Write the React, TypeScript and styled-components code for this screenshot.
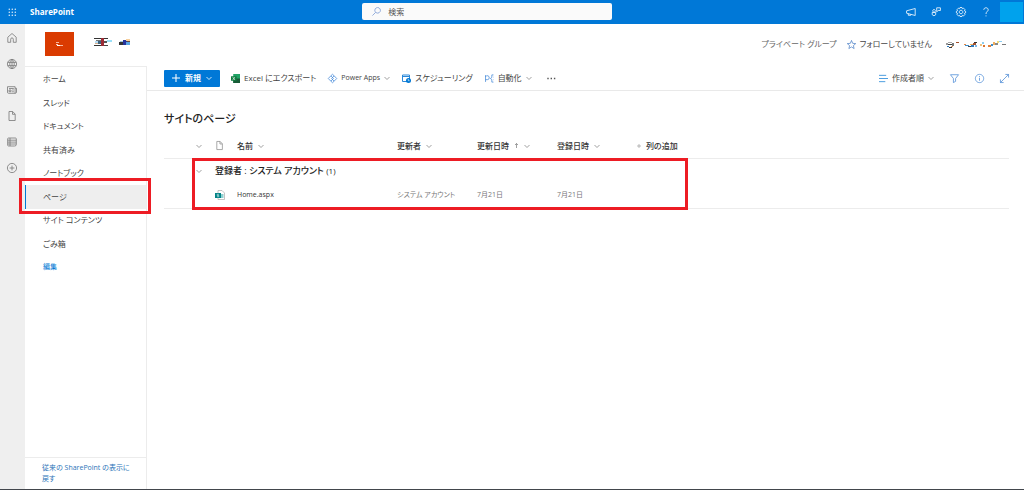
import React from 'react';
import styled, { createGlobalStyle } from 'styled-components';

const Global = createGlobalStyle`
  * { box-sizing: border-box; }
  body { margin: 0; background: #fff; color: #444;
    font-family: "Open Sans", "Noto Sans CJK JP", sans-serif; font-size: 8px; line-height: 12px;
    font-feature-settings: "palt"; }
  button, input { font: inherit; color: inherit; font-feature-settings: inherit; }
  button { background: none; border: 0; padding: 0; white-space: nowrap; text-align: left; }
  a { color: inherit; text-decoration: none; }
  svg { display: block; flex: none; fill: none; overflow: visible; }
  h1, ul { margin: 0; padding: 0; list-style: none; }
`;

const Page = styled.div`
  display: flex; flex-direction: column; min-height: 100vh; border-bottom: 1px solid #42464c;
`;
const SuiteBar = styled.header`
  display: grid; grid-template-columns: 22fr 250px 25fr; align-items: center;
  height: 24px; background: #0078d7; color: #fff;
`;
const Brand = styled.div`
  display: flex; align-items: center; gap: 13px; padding-left: 8px; font-weight: 700;
`;
const Search = styled.label`
  display: flex; align-items: center; gap: 7px; height: 17px; padding-left: 10px;
  margin-top: -1px; background: #fafafa; border-radius: 2px; color: #444;
`;
const SearchInput = styled.input`
  flex: 1; min-width: 0; border: 0; padding: 0; background: transparent; outline: 0;
  &::placeholder { color: #555; opacity: 1; }
`;
const SuiteActions = styled.div`
  display: flex; justify-content: flex-end; align-items: center; gap: 15px;
`;
const Avatar = styled.button`
  width: 23px; height: 20px; background: #00a2ed; margin: 0 1px 0 -6px;
`;
const Body = styled.div`
  display: flex; flex: 1;
`;
const AppRail = styled.nav`
  flex: none; width: 25px; background: #efefef; display: flex; flex-direction: column;
  align-items: center; gap: 16px; padding: 9px 1px 0 0; color: #777;
`;
const Site = styled.div`
  flex: 1; min-width: 0; display: flex; flex-direction: column;
`;
const SiteHeader = styled.div`
  display: flex; align-items: center; height: 42px; padding: 0 18px 2px 20px;
`;
const SiteLogo = styled.div`
  display: grid; place-items: center; width: 29px; height: 24px; background: #da3b01; margin-right: 20px;
`;
const Membership = styled.div`
  display: flex; align-items: center; gap: 10px; margin-left: auto; color: #666;
`;
const Follow = styled.button`
  display: flex; align-items: center; gap: 4px; color: #444; margin-right: 4px;
`;
const Columns = styled.div`
  display: flex; flex: 1;
`;
const SideNav = styled.nav`
  flex: none; width: 122px; display: flex; flex-direction: column;
  border: solid #ececec; border-width: 1px 1px 0 0;
`;
const NavLink = styled.a<{ $active?: boolean; $accent?: boolean }>`
  display: flex; align-items: center; height: 24px; padding-left: 18px;
  background: ${p => (p.$active ? '#eee' : 'none')};
  box-shadow: ${p => (p.$active ? 'inset 1px 0 #0078d4' : 'none')};
  color: ${p => (p.$accent ? '#0078d4' : '#444')};
  font-size: ${p => (p.$accent ? 7 : 8)}px;
`;
const NavItem = styled.li<{ $active?: boolean }>`
  position: relative;
  &:nth-child(even) { margin-bottom: -1px; }
  &::after {
    content: ""; display: ${p => (p.$active ? 'block' : 'none')};
    position: absolute; z-index: 1; inset: -7px -5px -5px -6px; border: 3px solid #ed1c24; pointer-events: none;
  }
`;
const Classic = styled.a`
  margin-top: auto; padding: 4px 10px 5px 17px; border-top: 1px solid #ececec;
  color: #2b74b8; font-size: 7px; line-height: 11px;
`;
const Main = styled.main`
  flex: 1; min-width: 0;
`;
const CommandBar = styled.div`
  display: flex; align-items: center; height: 25px; padding: 0 15px 0 17px;
  border-bottom: 1px solid #e9e9e9;
`;
const Command = styled.button<{ $gap?: number; $size?: number }>`
  display: flex; align-items: center; gap: 4px; margin-right: ${p => p.$gap ?? 12}px;
  color: #444; font-size: ${p => p.$size ?? 8}px;
`;
const NewButton = styled(Command)`
  height: 17px; padding: 0 8px; background: #0078d7; color: #fff; font-weight: 700;
  border-radius: 1px; gap: 5px;
`;
const ViewTools = styled.div`
  display: flex; align-items: center; gap: 16px; margin-left: auto;
`;
const Title = styled.h1`
  padding: 20px 0 0 17px; font-size: 11px; line-height: 16px; font-weight: 500; color: #222;
`;
const TableArea = styled.div`
  position: relative; margin: 7px 15px 0 17px;
`;
const List = styled.table`
  width: 100%; table-layout: fixed; border-collapse: collapse;
  th, td { padding: 0; text-align: left; font-weight: 400; }
  thead tr { height: 24px; }
  tbody tr { height: 25px; }
  thead tr, tbody tr:last-child { border-bottom: 1px solid #ececec; }
`;
const Col = styled.col<{ $w?: number }>`
  width: ${p => (p.$w ? p.$w + 'px' : 'auto')};
`;
const ToggleHead = styled.th`
  && { padding-left: 32px; }
`;
const Heading = styled.button`
  display: flex; align-items: center; gap: 5px; color: #333; font-weight: 500;
`;
const Group = styled.div`
  font-size: 9px; color: #222; font-weight: 500;
`;
const Count = styled.span`
  font-size: 8px; font-weight: 400;
`;
const Small = styled.td<{ $dark?: boolean }>`
  font-size: 7px; color: ${p => (p.$dark ? '#333' : '#777')};
`;
const Highlight = styled.div`
  position: absolute; left: 28px; top: 24px; width: 496px; height: 52px;
  border: 3px solid #ed1c24; pointer-events: none;
`;

const Chevron = ({ color = '#888' }: { color?: string }) => (
  <svg width="6" height="6" viewBox="0 0 6 6" stroke={color} strokeWidth=".8"><path d="M.5 2 3 4.5 5.5 2" /></svg>
);
type IconProps = { d: string; size?: number; color?: string; w?: number };
const Icon = ({ d, size = 10, color = 'currentColor', w = 0.8 }: IconProps) => (
  <svg width={size} height={size} viewBox="0 0 10 10" stroke={color} strokeWidth={w} strokeLinejoin="round"><path d={d} /></svg>
);

type Block = [number, number, number, number, string];
const Mosaic = ({ width, height, blocks }: { width: number; height: number; blocks: Block[] }) => (
  <svg width={width} height={height} viewBox={`0 0 ${width} ${height}`}>
    {blocks.map(([x, y, w, h, c], i) => <rect key={i} x={x} y={y} width={w} height={h} fill={c} />)}
  </svg>
);
const nameBlocks: Block[] = [
  [0, 0, 7, 1, '#333'], [2, 2, 5, 1, '#777'], [1, 3, 3, 2, '#b9dcf2'], [4, 3, 3, 3, '#3f6480'], [1, 5, 3, 1, '#d9b08c'],
  [0, 7, 7, 1, '#333'], [7, 0, 3, 8, '#9b2c35'], [10, 0, 4, 1, '#333'], [10, 3, 3, 2, '#555'], [10, 7, 4, 1, '#444'],
  [13, 2, 5, 2, '#9be0f8'], [25, 4, 4, 3, '#333'], [26, 3, 4, 1, '#9cc3e0'], [29, 2, 4, 5, '#26329b'],
  [32, 1, 4, 2, '#f6cf9c'], [33, 3, 3, 1, '#6a4a3a'], [32, 4, 4, 3, '#5aa5e2'],
];
const memberBlocks: Block[] = [
  [0, 2, 2, 2, '#999'], [2, 1, 4, 1, '#aaa'], [2, 3, 5, 1, '#444'], [6, 2, 2, 3, '#777'], [1, 5, 2, 1, '#2d79bd'],
  [3, 6, 3, 1, '#333'], [5, 5, 2, 1, '#d79a66'], [10, 1, 3, 1, '#a5522e'], [18, 3, 2, 1, '#e58b4a'], [19, 4, 4, 1, '#3c8dcc'],
  [22, 5, 3, 1, '#444'], [24, 3, 3, 1, '#efad5d'], [25, 4, 3, 2, '#2d79bd'], [27, 2, 3, 2, '#a5522e'], [28, 1, 3, 1, '#333'],
  [29, 4, 2, 2, '#7fb8e6'], [34, 3, 2, 2, '#efc37d'], [36, 1, 2, 2, '#8ccdf0'], [37, 4, 2, 2, '#d9722e'],
  [42, 4, 3, 2, '#e0803a'], [45, 3, 2, 2, '#3c8dcc'], [47, 1, 2, 3, '#efad5d'], [49, 2, 3, 2, '#888'], [51, 0, 2, 2, '#f4dc7a'],
  [53, 0, 3, 1, '#8ccdf0'], [56, 3, 4, 1, '#777'],
];
const logoBlocks: Block[] = [
  [0, 0, 3, 1, '#f7b9a0'], [0, 2, 2, 1, '#f9cdbb'], [1, 3, 3, 1, '#fff'], [4, 3, 3, 1, '#f7b9a0'],
];

const page = 'M2 .5h3.7l2.5 2.6v6.4H2zM5.5.7v2.6H8';
const rail = [
  ['ホーム', 'M.8 4.2 5 .5l4.2 3.7v5.1H6.3V6.2a1.3 1.3 0 0 0-2.6 0v3.1H.8z'],
  ['サイト', 'M5 .4a4.6 4.6 0 1 0 0 9.2A4.6 4.6 0 0 0 5 .4C2 2.8 2 7.2 5 9.6 8 7.2 8 2.8 5 .4M.8 3.4h8.4M.8 6.6h8.4M5 .4v9.2'],
  ['ニュース', 'M8.1 8.3H1.6Q.5 8.3.5 7.2V1.7h7.6zM8.1 3.3h1.4v4Q9.4 8.3 8.1 8.3M2 3.5h4.8M2 5h2v1.7H2zM5.2 5h1.6M5.2 6.7h1.6'],
  ['ファイル', page],
  ['リスト', 'M1.5 1h7Q9.3 1 9.3 2v5.5Q9.3 9 7.7 9H1.5Q.7 9 .7 8.2V1.8Q.7 1 1.5 1M.7 3.2h8.6M.7 5.1h8.6M.7 7h8.6M3 1v8'],
  ['作成', 'M5 .4a4.6 4.6 0 1 0 0 9.2A4.6 4.6 0 0 0 5 .4M5 2.6v4.8M2.6 5h4.8'],
];
const links = ['ホーム', 'スレッド', 'ドキュメント', '共有済み', 'ノートブック', 'ページ', 'サイト コンテンツ', 'ごみ箱', '編集'];
const suite = [
  ['お知らせ', 'M.6 3.8 9.2 1.5v7L.6 6.2zM2.3 6.7v1.6h2.5V7.4'],
  ['共有', 'M3 2.5a1.3 1.3 0 1 0 .1 0M1.2 5.5h3.5v2.2Q3 10 1.2 7.7zM5.7.8h3.7v2.7H7.2L5.7 4.8z'],
  ['設定', 'M4 .5h2l.4 1.2 1.2-.5 1.3 1.3-.5 1.2 1.2.5v1.7l-1.2.5.5 1.2-1.3 1.3-1.2-.5L6 9.5H4l-.4-1.1-1.2.5-1.3-1.3.5-1.2L.4 5.9V4.2l1.2-.5-.5-1.2 1.3-1.3 1.2.5zM5 3.2a1.8 1.8 0 1 0 .1 0'],
  ['ヘルプ', 'M2.8 2.8C2.8.1 7.2.1 7.2 2.8 7.2 4.6 5 4.4 5 7M5 8.4v1'],
];

export default function App() {
  return (
    <Page>
      <Global />
      <SuiteBar>
        <Brand>
          <button aria-label="アプリ起動ツール">
            <svg width="9" height="9" viewBox="0 0 9 9">
              {[0, 3, 6].map(y => [0, 3, 6].map(x => <circle key={`${x}${y}`} cx={x + 1.3} cy={y + 1.3} r=".8" fill="#d9ebfa" />))}
            </svg>
          </button>
          SharePoint
        </Brand>
        <Search>
          <Icon size={9} color="#6d8fcf" d="M6.2.6a3.1 3.1 0 1 0 .1 0M4.1 5.9.5 9.5" />
          <SearchInput type="search" placeholder="検索" aria-label="検索" />
        </Search>
        <SuiteActions>
          {suite.map(([name, d]) => <button key={name} aria-label={name}><Icon d={d} /></button>)}
          <Avatar aria-label="アカウント" />
        </SuiteActions>
      </SuiteBar>
      <Body>
        <AppRail aria-label="アプリ バー">
          {rail.map(([name, d]) => <button key={name} aria-label={name}><Icon d={d} /></button>)}
        </AppRail>
        <Site>
          <SiteHeader>
            <SiteLogo><Mosaic width={7} height={4} blocks={logoBlocks} /></SiteLogo>
            <Mosaic width={37} height={13} blocks={nameBlocks} />
            <Membership>
              <span>プライベート グループ</span>
              <Follow><Icon size={9} color="#4a7fc4" d="m5 .5 1.3 3.2 3.4.3-2.6 2.2.8 3.3L5 7.7 2.1 9.5l.8-3.3L.3 4l3.4-.3z" />フォローしていません</Follow>
              <Mosaic width={60} height={7} blocks={memberBlocks} />
            </Membership>
          </SiteHeader>
          <Columns>
            <SideNav>
              <ul>
                {links.map(l => (
                  <NavItem key={l} $active={l === 'ページ'}>
                    <NavLink href="#" $active={l === 'ページ'} $accent={l === '編集'}>{l}</NavLink>
                  </NavItem>
                ))}
              </ul>
              <Classic href="#">従来の SharePoint の表示に戻す</Classic>
            </SideNav>
            <Main>
              <CommandBar>
                <NewButton $gap={11}><Icon size={8} w={1.3} d="M5 0v10M0 5h10" />新規<Chevron color="#fff" /></NewButton>
                <Command>
                  <svg width="9" height="9" viewBox="0 0 8 8"><path d="M2 0h6v8H2z" fill="#21a366" /><path d="M5 4h3v4H2V4z" fill="#185c37" /><path d="M0 2h5v4H0z" fill="#107c41" /><path d="m1.6 2.8 1.8 2.4m0-2.4L1.6 5.2" stroke="#fff" strokeWidth=".6" /></svg>
                  Excel にエクスポート
                </Command>
                <Command $size={7}>
                  <Icon size={9} color="#3b83d6" d="M3.2 2 .3 5l2.9 3L6 5zM6.8 2l2.9 3-2.9 3L4 5zM3.2 2 5 .3 6.8 2M3.2 8 5 9.7 6.8 8" />
                  Power Apps<Chevron />
                </Command>
                <Command>
                  <svg width="9" height="9" viewBox="0 0 9 9"><path d="M.5 1h7v6.5h-7zM.5 2.5h7" stroke="#2b88d8" /><circle cx="6.5" cy="6.5" r="2.5" fill="#0078d4" /><path d="M6.3 5v1.7h1.3" stroke="#fff" strokeWidth=".6" /></svg>
                  スケジューリング
                </Command>
                <Command $gap={15}>
                  <Icon size={9} color="#3b83d6" d="M.6 1.2v7.6M.6 6.3h2a2.2 2.2 0 1 0-2-3.2M9.4 1H7.6v2.8L6 5l1.6 1.2V9h1.8M9.4 3.5H9M9.4 6.3H9" />
                  自動化<Chevron />
                </Command>
                <Command aria-label="その他">
                  <svg width="9" height="3" viewBox="0 0 9 3"><path d="M.3 1.5h1.4M3.6 1.5H5M6.9 1.5h1.4" stroke="#555" strokeWidth="1.4" /></svg>
                </Command>
                <ViewTools>
                  <Command $gap={0}><Icon size={9} color="#3b94dc" w={1} d="M0 1.5h8M0 5h10M0 8.5h7" />作成者順<Chevron /></Command>
                  <button aria-label="フィルター"><Icon size={9} color="#4285d4" d="M.5.8h9L6.2 5v3.2L3.8 9.5V5z" /></button>
                  <button aria-label="情報"><Icon size={9} color="#4285d4" d="M5 .4a4.6 4.6 0 1 0 .1 0M5 4.2v3.3M5 2.3v1" /></button>
                  <button aria-label="展開"><Icon size={9} color="#4285d4" d="M6 .5h3.5V4M9.5.5l-9 9M.5 6v3.5H4" /></button>
                </ViewTools>
              </CommandBar>
              <Title>サイトのページ</Title>
              <TableArea>
                <List>
                  <colgroup><Col $w={51} /><Col $w={22} /><Col $w={160} /><Col $w={80} /><Col $w={80} /><Col $w={80} /><Col /></colgroup>
                  <thead>
                    <tr>
                      <ToggleHead><Chevron /></ToggleHead>
                      <th><Icon size={9} color="#888" d={page} /></th>
                      <th><Heading>名前<Chevron /></Heading></th>
                      <th><Heading>更新者<Chevron /></Heading></th>
                      <th><Heading>更新日時<Icon size={5} color="#777" w={1.4} d="M5 10V1M2 4l3-3 3 3" /><Chevron /></Heading></th>
                      <th><Heading>登録日時<Chevron /></Heading></th>
                      <th><Heading><Icon size={4} color="#999" w={1.6} d="M5 0v10M0 5h10" />列の追加</Heading></th>
                    </tr>
                  </thead>
                  <tbody>
                    <tr>
                      <ToggleHead as="td"><Chevron /></ToggleHead>
                      <td colSpan={6}><Group>登録者 : システム アカウント <Count>(1)</Count></Group></td>
                    </tr>
                    <tr>
                      <td />
                      <td>
                        <svg width="10" height="10" viewBox="0 0 10 10"><path d="M3 .5h4L9.5 3v6.5H3z" fill="#fff" stroke="#aaa" strokeWidth=".7" /><path d="M6 4h2.5v4H6z" fill="#8ed0d0" /><path d="M0 3h6v5H0z" fill="#038387" /><path d="M4 4.3H2.2v1.2h1.6v1.2H2" stroke="#fff" strokeWidth=".5" /></svg>
                      </td>
                      <Small $dark><a href="#">Home.aspx</a></Small>
                      <Small>システム アカウント</Small>
                      <Small>7月21日</Small>
                      <Small>7月21日</Small>
                      <td />
                    </tr>
                  </tbody>
                </List>
                <Highlight />
              </TableArea>
            </Main>
          </Columns>
        </Site>
      </Body>
    </Page>
  );
}
